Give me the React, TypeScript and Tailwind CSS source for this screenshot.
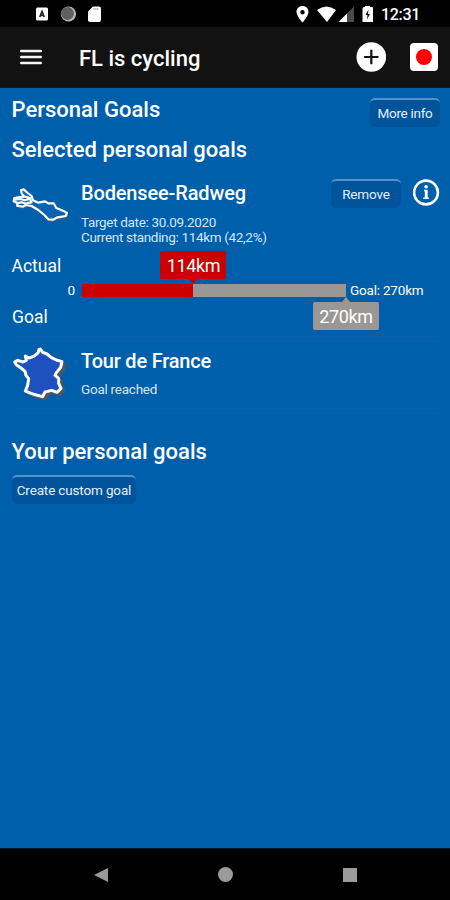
import React from 'react';

const StatusBar: React.FC = () => (
  <div className="h-[27px] shrink-0 bg-black flex items-center justify-between pl-[35px] pr-[31px]">
    <svg width="68" height="18" viewBox="0 0 68 18" className="mt-px">
      <rect x="1" y="2.5" width="12" height="13" rx="1.5" fill="#fff" />
      <path d="M4.8 12 L7 6.500 L9.200 12 M5.5 10.5 H8.5" stroke="#222" strokeWidth="1.7" fill="none" />
      <circle cx="33.500" cy="9" r="7.600" fill="#b8b8b8" />
      <circle cx="32.500" cy="8.500" r="6.400" fill="#606060" />
      <path d="M58 1.5 H64 Q66 1.5 66 3.5 V15 Q66 17 64 17 H55 Q53 17 53 15 V6.5 Z" fill="#fff" />
      <path d="M58.5 4 H63.5" stroke="#999" strokeWidth="1.6" strokeDasharray="1.2 .6" />
    </svg>
    <div className="flex items-center">
      <svg width="78" height="18" viewBox="0 0 78 18" className="mt-px">
        <path
          d="M7.500 1 C4 1 1.500 3.5 1.500 7 C1.500 11 7.500 17.5 7.500 17.5 S13.500 11 13.500 7 C13.500 3.5 11 1 7.500 1 Z M7.500 5 a2.200 2.200 0 1 1 0 4.400 a2.200 2.200 0 0 1 0 -4.400 Z"
          fill="#fff"
          fillRule="evenodd"
        />
        <path d="M22 5 Q31.500 -2 41 5 L32 17 Z" fill="#fff" />
        <path d="M59 1.500 V17 H43.500 Z" fill="#4a4a4a" />
        <path d="M52 8.500 V17 H43.500 Z" fill="#fff" />
        <path d="M70 2 V1 H75 V2 H77 Q78 2 78 3.500 V17 H67.500 V3.500 Q67.500 2 69 2 Z" fill="#fff" />
        <path d="M73.500 4.500 L70.500 10 H72.500 L72 14.500 L75 9 H73 Z" fill="#111" />
      </svg>
      <span className="ml-[8px] mt-[2px] w-[38px] whitespace-nowrap text-[16px] leading-none font-medium tracking-[-0.3px] text-white">
        12:31
      </span>
    </div>
  </div>
);

const AppBar: React.FC = () => (
  <header className="h-[61px] shrink-0 bg-[#121212] border-b border-[#0d1a28] flex items-center pl-[20px] pr-[12px]">
    <svg width="22" height="16" viewBox="0 0 22 16" className="mb-px">
      <path d="M1.200 2 H20.800 M1.200 8 H20.800 M1.200 14 H20.800" stroke="#f4f4f4" strokeWidth="2.400" strokeLinecap="round" />
    </svg>
    <h1 className="ml-[37px] mt-[3px] flex-1 whitespace-nowrap text-[22px] leading-none font-medium text-white">FL is cycling</h1>
    <svg width="30" height="30" viewBox="0 0 30 30" className="mr-[24px]">
      <circle cx="15.300" cy="15" r="14.800" fill="#fff" />
      <path d="M15.300 7.800 V22.200 M8.100 15 H22.500" stroke="#111" strokeWidth="2.200" />
    </svg>
    <div className="size-[28px] rounded-[4px] bg-white flex items-center justify-center">
      <div className="size-[16px] rounded-full bg-[#ff0000]" />
    </div>
  </header>
);

const GoalButton: React.FC<{ className: string; children: React.ReactNode }> = ({ className, children }) => (
  <button
    className={`${className} h-[29px] shrink-0 rounded-[5px] border-t-2 border-[#5590c8] bg-[#00549b] flex items-center justify-center whitespace-nowrap text-[13.500px] leading-none text-[#e4efff]`}
  >
    {children}
  </button>
);

const BodenseeIcon = () => (
  <svg width="60" height="40" viewBox="21 15 180 120" fill="none" stroke="#fff" strokeLinejoin="round">
    <path
      d="M48 30 L56 28 L68 39 L80 48 L84 61 L100 68 L120 64 L130 70 L146 70 L154 84 L174 92 L186 99 L182 108 L158 112 L144 119 L130 118 L118 105 L100 90 L80 78 L62 75 L54 80 L36 77 L38 69 L26 64 L28 54 L44 51 L58 50 L50 40 Z"
      transform="translate(2 3)"
      stroke="#665f55"
      strokeWidth="5"
    />
    <path
      d="M48 30 L56 28 L68 39 L80 48 L84 61 L100 68 L120 64 L130 70 L146 70 L154 84 L174 92 L186 99 L182 108 L158 112 L144 119 L130 118 L118 105 L100 90 L80 78 L62 75 L54 80 L36 77 L38 69 L26 64 L28 54 L44 51 L58 50 L50 40 Z"
      fill="#0b62ae"
      strokeWidth="6.500"
    />
    <path d="M30 59 L46 57 L60 61 L73 57 M38 69 L50 67 L62 71 L77 67 M60 50 L75 54 L80 70" strokeWidth="6.500" />
  </svg>
);

const FranceIcon = () => (
  <svg width="56" height="56" viewBox="21 15 168 168" strokeLinejoin="round">
    <path
      d="M106 27 L113 37 L126 42 L138 52 L154 60 L171 65 L167 82 L154 98 L150 106 L161 115 L161 130 L168 145 L156 157 L140 151 L120 156 L113 170 L94 165 L78 160 L61 153 L68 136 L71 116 L63 106 L60 94 L48 84 L34 74 L29 66 L38 61 L54 66 L64 61 L61 48 L72 54 L86 49 L99 39 L102 29 Z"
      transform="translate(9 8)"
      fill="#50565b"
      stroke="#50565b"
      strokeWidth="7"
    />
    <path
      d="M106 27 L113 37 L126 42 L138 52 L154 60 L171 65 L167 82 L154 98 L150 106 L161 115 L161 130 L168 145 L156 157 L140 151 L120 156 L113 170 L94 165 L78 160 L61 153 L68 136 L71 116 L63 106 L60 94 L48 84 L34 74 L29 66 L38 61 L54 66 L64 61 L61 48 L72 54 L86 49 L99 39 L102 29 Z"
      fill="#1f50c0"
      stroke="#fff"
      strokeWidth="9"
    />
  </svg>
);

const ProgressChart: React.FC<{ actual: number; goal: number }> = ({ actual, goal }) => (
  <div className="text-[17.500px] leading-none text-white">
    <div className="h-[34px] flex items-center">
      <span className="ml-[-0.5px]">Actual</span>
    </div>
    <div className="h-[13px] flex items-center text-[13.500px]">
      <span className="w-[63px] text-right">0</span>
      <div className="relative ml-[7px] w-[264px] h-[13px] bg-[#999896]">
        <div className="h-full bg-[#cc0000]" style={{ width: `${(actual / goal) * 100}%` }} />
        <div
          className="absolute bottom-[18px] w-[66px] h-[28px] -translate-x-1/2 rounded-[2px] bg-[#cc0000] flex items-center justify-center pt-px text-[18px] tracking-[-0.4px]"
          style={{ left: `${(actual / goal) * 100}%` }}
        >
          {actual}km
          <span className="absolute top-full left-[29px] border-x-[4px] border-t-[5px] border-x-transparent border-t-[#cc0000]" />
        </div>
        <div className="absolute top-[18px] left-full w-[66px] h-[28px] -translate-x-1/2 rounded-[2px] bg-[#999896] flex items-center justify-center pt-px text-[18px] tracking-[-0.4px]">
          {goal}km
          <span className="absolute bottom-full left-[29px] border-x-[4px] border-b-[5px] border-x-transparent border-b-[#999896]" />
        </div>
      </div>
      <span className="ml-[4px] whitespace-nowrap tracking-[-0.2px]">Goal: {goal}km</span>
    </div>
    <div className="h-[38px] flex items-center pt-[3px]">Goal</div>
  </div>
);

function App() {
  return (
    <div className="w-[450px] h-[900px] flex flex-col overflow-hidden bg-[#005fab] font-['Roboto','Liberation_Sans',sans-serif]">
      <StatusBar />
      <AppBar />
      <main className="flex-1 px-[12px] pr-[10px] pt-[9px] text-white">
        <div className="h-[32px] flex items-start justify-between">
          <h2 className="mt-px ml-[-0.5px] text-[22px] leading-[24px] font-medium whitespace-nowrap">Personal Goals</h2>
          <GoalButton className="w-[70px] mt-px tracking-[-0.3px]">More info</GoalButton>
        </div>
        <h2 className="mt-[9px] ml-[-0.5px] text-[22px] leading-[24px] font-medium whitespace-nowrap">Selected personal goals</h2>

        <section className="mt-[16px] h-[72px] flex">
          <div className="w-[69px] pt-[7px]">
            <BodenseeIcon />
          </div>
          <div className="flex-1 pt-[3px]">
            <h3 className="text-[20px] leading-[24px] font-medium tracking-[-0.15px] whitespace-nowrap">Bodensee-Radweg</h3>
            <div className="mt-[10px] text-[13.500px] leading-[15px] tracking-[-0.33px] text-[#d3e6fa] whitespace-nowrap">
              <p>Target date: 30.09.2020</p>
              <p>Current standing: 114km (42,2%)</p>
            </div>
          </div>
          <GoalButton className="w-[70px] mt-px tracking-[-0.15px]">Remove</GoalButton>
          <svg width="27" height="27" viewBox="0 0 27 27" className="ml-[12px] mt-px">
            <circle cx="13" cy="13.500" r="11.900" fill="none" stroke="#fff" strokeWidth="2.600" />
            <path d="M11 10.800 H14.700 V18.500 H15.800 V20 H10.200 V18.500 H11.800 V12.300 H11 Z" fill="#fff" />
            <circle cx="13.100" cy="7.800" r="1.800" fill="#fff" />
          </svg>
        </section>

        <ProgressChart actual={114} goal={270} />

        <section className="mt-px pt-[8px] h-[73px] flex border-y border-[#0b5fa9]">
          <div className="w-[69px]">
            <FranceIcon />
          </div>
          <div className="pt-[4px]">
            <h3 className="text-[20px] leading-[24px] font-medium tracking-[-0.2px] whitespace-nowrap">Tour de France</h3>
            <p className="mt-[7px] text-[13.500px] leading-[18px] tracking-[-0.25px] text-[#d3e6fa] whitespace-nowrap">Goal reached</p>
          </div>
        </section>

        <h2 className="mt-[31px] ml-[-0.5px] text-[22px] leading-[24px] font-medium whitespace-nowrap">Your personal goals</h2>
        <div className="mt-[11px]">
          <GoalButton className="w-[124px] tracking-[-0.15px]">Create custom goal</GoalButton>
        </div>
      </main>
      <nav className="h-[52px] shrink-0 bg-black border-t border-[#04182a] flex items-center justify-between pl-[94px] pr-[93px]">
        <svg width="14" height="14" viewBox="0 0 14 14">
          <path d="M0 7 L14 0 V14 Z" fill="#9b9b9b" />
        </svg>
        <div className="size-[15px] rounded-full bg-[#9b9b9b]" />
        <div className="size-[14px] bg-[#9b9b9b]" />
      </nav>
    </div>
  );
}

export default App;
